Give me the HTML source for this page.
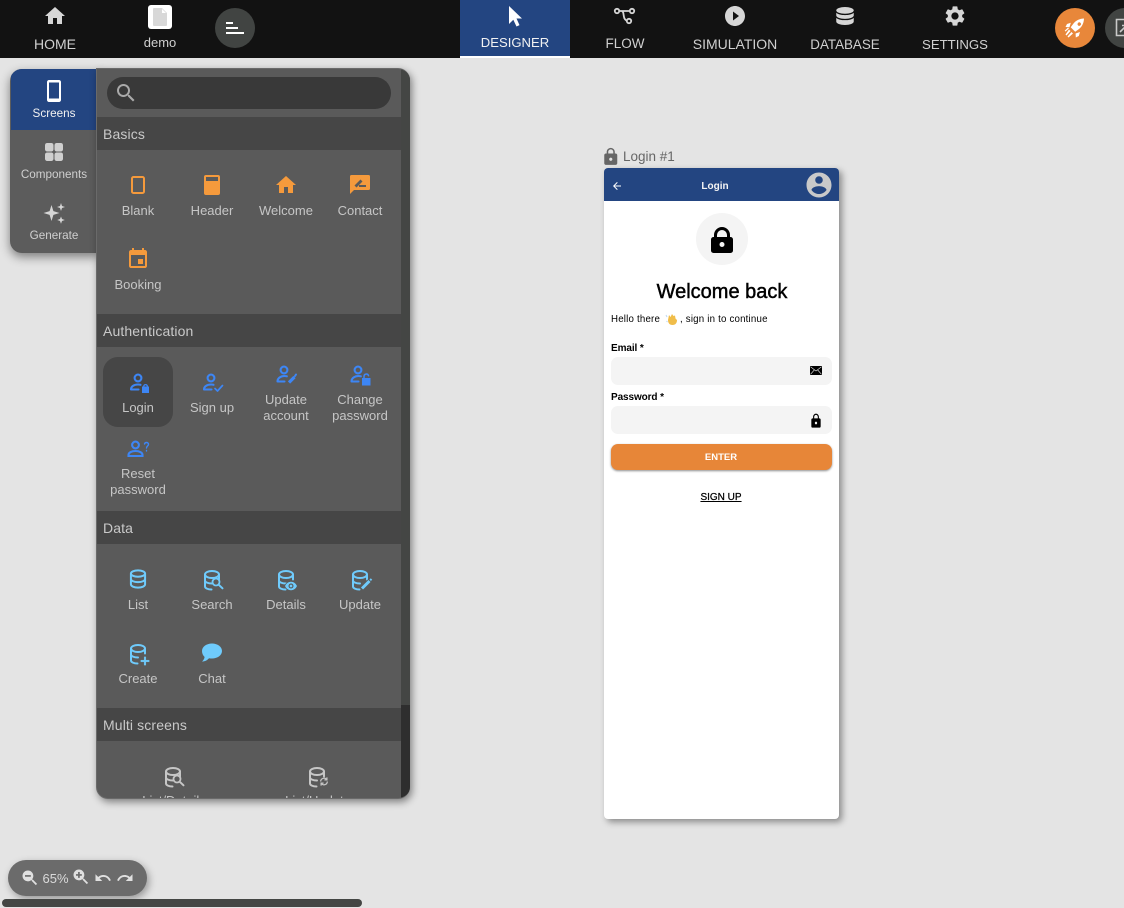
<!DOCTYPE html>
<html><head><meta charset="utf-8"><title>Designer</title>
<style>
html,body{margin:0;padding:0;width:1124px;height:908px;overflow:hidden;background:#e4e4e4;font-family:"Liberation Sans",sans-serif}
*{box-sizing:border-box}
.a{position:absolute}
.t{position:absolute;text-align:center;white-space:nowrap;transform:translateX(-50%);line-height:16px}
svg{position:absolute;display:block}
#top{left:0;top:0;width:1124px;height:58px;background:#121212;overflow:hidden}
.nav{font-size:14px;color:#d0d0d0}
.lab{font-size:13px;color:#c6c6c6;line-height:16px;margin-top:1px}
.sec{position:absolute;left:1px;width:304px;height:33px;background:#464646;color:#c9c9c9;font-size:14px;line-height:35px;padding-left:6px;letter-spacing:.12px}
.ltab{font-size:11.7px;color:#cfcfcf;margin-top:1px}
.r{font-family:"Liberation Sans",sans-serif;color:#000}
</style></head>
<body>
<svg width="0" height="0" style="position:absolute"><defs>
<symbol id="db" viewBox="0 0 24 24"><ellipse cx="9" cy="5.500" rx="7" ry="3.500" fill="none" stroke="currentColor" stroke-width="2"/><path d="M2 5.500v12c0 1.700 2.800 3 6.500 3M16 5.500v5M2 11.500c0 1.700 3 3 7 3" fill="none" stroke="currentColor" stroke-width="2" stroke-linecap="round"/></symbol>
</defs></svg>

<div id="top" class="a">
  <svg style="left:43px;top:4px" width="24" height="24" viewBox="0 0 24 24" fill="#d6d6d6"><path d="M10 20v-6h4v6h5v-8h3L12 3 2 12h3v8z"/></svg>
  <div class="t nav" style="left:55px;top:36px">HOME</div>
  <div class="a" style="left:148px;top:5px;width:24px;height:24px;background:#fff;border-radius:3px"></div>
  <svg style="left:152px;top:8px" width="16" height="18" viewBox="0 0 16 18"><path d="M2 0h8l5 5v12a1 1 0 0 1-1 1H2a1 1 0 0 1-1-1V1a1 1 0 0 1 1-1z" fill="#d8d8d8"/><path d="M10 1v4h4z" fill="#fff"/></svg>
  <div class="t" style="left:160px;top:35px;font-size:13px;color:#d0d0d0">demo</div>
  <div class="a" style="left:215px;top:8px;width:40px;height:40px;border-radius:50%;background:#414442"></div>
  <div class="a" style="left:226px;top:22px;width:7px;height:2px;background:#fff"></div>
  <div class="a" style="left:226px;top:27px;width:12px;height:2px;background:#fff"></div>
  <div class="a" style="left:226px;top:32px;width:18px;height:2px;background:#fff"></div>

  <div class="a" style="left:460px;top:0;width:110px;height:58px;background:#234581;border-bottom:2px solid #fff"></div>
  <svg style="left:505px;top:4px" width="22" height="24" viewBox="0 0 22 24"><path d="M4 2v18l4.300-4.200 3.200 6.700 3-1.400-3-6.600H17z" fill="#fff"/></svg>
  <div class="t nav" style="left:515px;top:35px;color:#f2f2f2;font-size:13.100px">DESIGNER</div>

  <svg style="left:613px;top:4px" width="24" height="24" viewBox="0 0 24 24" fill="none" stroke="#d6d6d6" stroke-width="1.800"><circle cx="4" cy="7" r="2.200"/><circle cx="19" cy="7" r="2.200"/><circle cx="16" cy="17" r="2.200"/><path d="M6.300 7H16.700M8.500 7c1 0 1.500.6 1.800 2l.6 3.500c.3 2 1.300 3.500 2.900 4.300"/></svg>
  <div class="t nav" style="left:625px;top:36px;font-size:13.500px">FLOW</div>

  <svg style="left:723px;top:4px" width="24" height="24" viewBox="0 0 24 24"><path d="M12 2C6.480 2 2 6.480 2 12s4.480 10 10 10 10-4.480 10-10S17.520 2 12 2zm-2 14.500v-9l6 4.500-6 4.500z" fill="#d6d6d6"/></svg>
  <div class="t nav" style="left:735px;top:36px">SIMULATION</div>

  <svg style="left:833px;top:4px" width="24" height="24" viewBox="0 0 24 24" fill="#d6d6d6"><g transform="translate(12 12) scale(1.25 1.02) translate(-12 -11.500)"><ellipse cx="12" cy="6" rx="7" ry="3.300"/><path d="M5 8.300v2.700c0 1.800 3.100 3.300 7 3.300s7-1.500 7-3.300V8.300c-1.200 1.500-3.900 2.300-7 2.300s-5.800-.8-7-2.300zM5 13.300V17c0 1.800 3.100 3.300 7 3.300s7-1.500 7-3.300v-3.700c-1.200 1.500-3.900 2.300-7 2.300s-5.800-.8-7-2.300z"/></g></svg>
  <div class="t nav" style="left:845px;top:37px;font-size:13.400px">DATABASE</div>

  <svg style="left:943px;top:4px" width="24" height="24" viewBox="0 0 24 24"><path d="M19.140 12.940c.04-.3.06-.61.06-.94 0-.32-.02-.64-.07-.94l2.030-1.580c.18-.14.23-.41.12-.61l-1.920-3.320c-.12-.22-.37-.29-.59-.22l-2.390.96c-.5-.38-1.030-.7-1.620-.94l-.36-2.540c-.04-.24-.24-.41-.48-.41h-3.840c-.24 0-.43.17-.47.41l-.36 2.540c-.59.24-1.130.57-1.620.94l-2.390-.96c-.22-.08-.47 0-.59.22L2.740 8.870c-.12.21-.08.47.12.61l2.030 1.580c-.05.3-.09.63-.09.94s.02.64.07.94l-2.030 1.580c-.18.14-.23.41-.12.61l1.920 3.320c.12.22.37.29.59.22l2.390-.96c.5.38 1.030.7 1.620.94l.36 2.540c.05.24.24.41.48.41h3.840c.24 0 .44-.17.47-.41l.36-2.540c.59-.24 1.130-.56 1.620-.94l2.390.96c.22.08.47 0 .59-.22l1.920-3.320c.12-.22.07-.47-.12-.61l-2.010-1.580zM12 15.600c-1.980 0-3.600-1.620-3.600-3.600s1.620-3.600 3.600-3.600 3.600 1.620 3.600 3.600-1.620 3.600-3.600 3.600z" fill="#d6d6d6"/></svg>
  <div class="t nav" style="left:955px;top:37px;font-size:13.200px">SETTINGS</div>

  <div class="a" style="left:1055px;top:8px;width:40px;height:40px;border-radius:50%;background:#e8873a"></div>
  <svg style="left:1063px;top:16px" width="24" height="24" viewBox="0 0 24 24" fill="#fff"><path d="M21 2.500c-4.500.2-8 1.800-10.500 5l-2.800 3.800 4.500 4.500 3.800-2.800c3.200-2.500 4.800-6 5-10.500zM15 7a1.700 1.700 0 1 1 2.400 2.400A1.700 1.700 0 0 1 15 7z" fill-rule="evenodd"/><path d="M7.800 6.800 4 8l-1.500 3 4 .2zM17 16l-1.200 4-3 1.500-.2-4zM6 13.500l1.500 1.500-4 4.500-1-1zM8.500 16l1.500 1.500-4.500 4-1-1zM5 11.500l1 1-3.500 3-.8-.8z"/></svg>
  <div class="a" style="left:1105px;top:8px;width:40px;height:40px;border-radius:50%;background:#414442"></div>
  <svg style="left:1114px;top:18px" width="20" height="20" viewBox="0 0 20 20" fill="none" stroke="#c9c9c9" stroke-width="1.600"><path d="M2.500 1.500h15v16h-15z"/><path d="M6 14l6-6M8 7.500h4.500V12"/></svg>
</div>

<!-- left tabs -->
<div class="a" style="left:10px;top:69px;width:90px;height:184px;background:#5c5c5c;border-radius:12px 0 0 12px;box-shadow:0 4px 10px rgba(0,0,0,.45);overflow:hidden">
  <div class="a" style="left:1px;top:0;width:86px;height:61px;background:#234581"></div>
</div>
<svg style="left:44px;top:79px" width="20" height="24" viewBox="0 0 20 24"><path d="M5 1h10c1.100 0 2 .9 2 2v18c0 1.100-.9 2-2 2H5c-1.100 0-2-.9-2-2V3c0-1.100.9-2 2-2zm0 3v15.500h10V3.500H5z" fill="#fff" fill-rule="evenodd"/></svg>
<div class="t ltab" style="left:54px;top:105px;color:#f2f2f2">Screens</div>
<svg style="left:44px;top:142px" width="20" height="20" viewBox="0 0 20 20" fill="#cfcfcf"><rect x="1" y="1" width="8.500" height="8.500" rx="2.200"/><rect x="10.500" y="1" width="8.500" height="8.500" rx="2.200"/><rect x="1" y="10.500" width="8.500" height="8.500" rx="2.200"/><rect x="10.500" y="10.500" width="8.500" height="8.500" rx="2.200"/></svg>
<div class="t ltab" style="left:54px;top:166px">Components</div>
<svg style="left:42px;top:201px" width="24" height="24" viewBox="0 0 24 24" fill="#d6d6d6"><path d="M9.500 4l1.900 6.100 6.100 1.900-6.100 1.900-1.900 6.100-1.900-6.100L1.500 12l6.100-1.900zM19 2l1 3 3 1-3 1-1 3-1-3-3-1 3-1zM19 15.500l1 2.500 2.800 1-2.800 1-1 2.800-1-2.800-2.800-1 2.800-1z"/></svg>
<div class="t ltab" style="left:54px;top:227px">Generate</div>

<!-- main panel -->
<div class="a" style="left:96px;top:68px;width:314px;height:731px;background:#5a5a5a;border-radius:0 12px 12px 12px;box-shadow:2px 3px 8px rgba(0,0,0,.45);overflow:hidden;border:1px solid #6a6a6a;border-width:1px 0 1px 1px">
  <div class="a" style="left:304px;top:0;width:10px;height:636px;background:#444644"></div>
  <div class="a" style="left:304px;top:636px;width:10px;height:100px;background:#2e2e2e"></div>
  <div class="a" style="left:10px;top:8px;width:284px;height:32px;border-radius:16px;background:#393939"></div>
  <div class="sec" style="left:0;top:48px">Basics</div>
  <div class="sec" style="left:0;top:245px">Authentication</div>
  <div class="sec" style="left:0;top:442px">Data</div>
  <div class="sec" style="left:0;top:639px">Multi screens</div>
  <div class="a" style="left:6px;top:288px;width:70px;height:70px;border-radius:15px;background:#464646"></div>
  <div class="t lab" style="left:77px;top:723px">List/Details</div>
  <div class="t lab" style="left:221px;top:723px">List/Update</div>
</div>
<svg style="left:114px;top:81px" width="24" height="24" viewBox="0 0 24 24"><path d="M15.500 14h-.79l-.28-.27C15.410 12.590 16 11.110 16 9.500 16 5.910 13.090 3 9.500 3S3 5.910 3 9.500 5.910 16 9.500 16c1.610 0 3.090-.59 4.230-1.570l.27.280v.79l5 4.990L20.490 19l-4.990-5zm-6 0C7.010 14 5 11.990 5 9.500S7.010 5 9.500 5 14 7.010 14 9.500 11.990 14 9.500 14z" fill="#aaa"/></svg>

<!-- Basics -->
<svg style="left:126px;top:172px" width="24" height="24" viewBox="0 0 24 24"><rect x="6" y="5" width="12" height="16" rx="1.500" fill="none" stroke="#f59a3c" stroke-width="2"/></svg>
<div class="t lab" style="left:138px;top:202px">Blank</div>
<svg style="left:200px;top:172px" width="24" height="24" viewBox="0 0 24 24"><path d="M6 3h12a2 2 0 0 1 2 2v16a2 2 0 0 1-2 2H6a2 2 0 0 1-2-2V5a2 2 0 0 1 2-2zM6 5v4h12V5z" fill="#f59a3c" fill-rule="evenodd"/></svg>
<div class="t lab" style="left:212px;top:202px">Header</div>
<svg style="left:274px;top:173px" width="24" height="24" viewBox="0 0 24 24"><path d="M10 20v-6h4v6h5v-8h3L12 3 2 12h3v8z" fill="#f59a3c"/></svg>
<div class="t lab" style="left:286px;top:202px">Welcome</div>
<svg style="left:348px;top:172px" width="24" height="24" viewBox="0 0 24 24"><path d="M3.500 3h17A1.500 1.500 0 0 1 22 4.500v12a1.500 1.500 0 0 1-1.500 1.500H6l-4 4V4.500A1.500 1.500 0 0 1 3.500 3z" fill="#f59a3c"/><path d="M7.500 14.500l6-6" stroke="#5a5a5a" stroke-width="2.800" fill="none"/><path d="M11 14h7" stroke="#5a5a5a" stroke-width="2" fill="none"/></svg>
<div class="t lab" style="left:360px;top:202px">Contact</div>
<svg style="left:126px;top:247px" width="24" height="24" viewBox="0 0 24 24"><path d="M17 12h-5v5h5v-5zM16 1v2H8V1H6v2H5c-1.110 0-1.990.9-1.990 2L3 19c0 1.100.89 2 2 2h14c1.100 0 2-.9 2-2V5c0-1.100-.9-2-2-2h-1V1h-2zm3 18H5V8h14v11z" fill="#f59a3c"/></svg>
<div class="t lab" style="left:138px;top:276px">Booking</div>

<!-- Auth -->
<svg style="left:126px;top:372px" width="26" height="24" viewBox="0 0 26 24" fill="none" stroke="#3d86f5" stroke-width="2.100" stroke-linecap="round"><circle cx="12" cy="6" r="3.400"/><path d="M5 17.500c0-3.400 3.500-5 7-5 1 0 1.800.1 2.500.3M5 17.500h7.500"/><path d="M16.500 15h6v5.500h-6z" fill="#3d86f5" stroke-width="1"/><path d="M17.800 15v-1a1.800 1.800 0 0 1 3.500 0V15" stroke-width="1.300"/></svg>
<div class="t lab" style="left:138px;top:399px">Login</div>
<svg style="left:200px;top:372px" width="26" height="24" viewBox="0 0 26 24" fill="none" stroke="#3d86f5" stroke-width="2.100" stroke-linecap="round" stroke-linejoin="round"><circle cx="11" cy="6" r="3.400"/><path d="M4 17.500c0-3.400 3.500-5 7-5 1 0 1.800.1 2.500.3M4 17.500h7.500"/><path d="M15 16.500l2.500 2.500 5-5.500" stroke-width="1.700"/></svg>
<div class="t lab" style="left:212px;top:399px">Sign up</div>
<svg style="left:274px;top:362px" width="26" height="24" viewBox="0 0 26 24" fill="none" stroke="#3d86f5" stroke-width="2.100" stroke-linecap="round" stroke-linejoin="round"><circle cx="10" cy="8" r="3.400"/><path d="M3.500 19.500c0-3.400 3.300-5.500 6.800-5.500 1 0 1.800.1 2.500.3M3.500 19.500h7"/><path d="M15 20.500l5.500-5.500" stroke-width="3.200" stroke-linecap="butt"/><path d="M21 14l1-1.500" stroke-width="2"/></svg>
<div class="t lab" style="left:286px;top:391px">Update</div>
<div class="t lab" style="left:286px;top:407px">account</div>
<svg style="left:348px;top:362px" width="26" height="24" viewBox="0 0 26 24" fill="none" stroke="#3d86f5" stroke-width="2.100" stroke-linecap="round"><circle cx="10" cy="8" r="3.400"/><path d="M3.500 19.500c0-3.400 3.300-5.500 6.800-5.500 1 0 1.800.1 2.500.3M3.500 19.500h7"/><path d="M14.500 16.500h7.500v6.500h-7.500z" fill="#3d86f5" stroke-width="1"/><path d="M16 16v-1.700a2.300 2.300 0 0 1 4.500-.6" stroke-width="1.500"/></svg>
<div class="t lab" style="left:360px;top:391px">Change</div>
<div class="t lab" style="left:360px;top:407px">password</div>
<svg style="left:126px;top:437px" width="26" height="24" viewBox="0 0 26 24" fill="none" stroke="#3d86f5" stroke-width="2.100" stroke-linecap="round"><circle cx="9.500" cy="8" r="3.400"/><path d="M2.500 19v-1c0-2.500 3.200-4 7-4s7 1.500 7 4v1z"/><path d="M18.500 7c.3-1 1.100-1.500 2-1.500 1.200 0 2 .8 2 1.800 0 1.800-2 1.700-2 3.700M20.500 13.500v.5" stroke-width="1.400"/></svg>
<div class="t lab" style="left:138px;top:465px">Reset</div>
<div class="t lab" style="left:138px;top:481px">password</div>

<!-- Data -->
<svg style="left:128px;top:569px" width="20" height="20" viewBox="0 0 24 24" fill="none" stroke="#6fcbfc" stroke-width="2.400" stroke-linecap="round"><ellipse cx="12" cy="5.500" rx="8.500" ry="3.800"/><path d="M3.500 5.500v13c0 2.100 3.800 3.800 8.500 3.800s8.500-1.700 8.500-3.800v-13M3.500 12c0 2.100 3.800 3.800 8.500 3.800s8.500-1.700 8.500-3.800"/></svg>
<div class="t lab" style="left:138px;top:596px">List</div>
<svg style="left:203px;top:569px;color:#6fcbfc" width="24" height="24"><use href="#db"/></svg>
<svg style="left:203px;top:569px" width="24" height="24" viewBox="0 0 24 24" fill="none" stroke="#6fcbfc" stroke-width="1.800" stroke-linecap="round"><circle cx="13" cy="13" r="3.500" fill="#5a5a5a"/><path d="M15.800 15.800l3.700 3.500" stroke-width="2"/></svg>
<div class="t lab" style="left:212px;top:596px">Search</div>
<svg style="left:277px;top:569px;color:#6fcbfc" width="24" height="24"><use href="#db"/></svg>
<svg style="left:284px;top:581px" width="14" height="10" viewBox="0 0 16 12"><path d="M8 .5C4.500.5 1.700 3 .3 6c1.400 3 4.200 5.500 7.700 5.500S14.300 9 15.700 6C14.300 3 11.500.5 8 .5z" fill="#6fcbfc" stroke="#5a5a5a" stroke-width=".8"/><circle cx="8" cy="6" r="3" fill="#5a5a5a"/><circle cx="8" cy="6" r="1.600" fill="#6fcbfc"/></svg>
<div class="t lab" style="left:286px;top:596px">Details</div>
<svg style="left:351px;top:569px;color:#6fcbfc" width="24" height="24"><use href="#db"/></svg>
<svg style="left:360px;top:577px" width="14" height="14" viewBox="0 0 14 14" fill="none"><path d="M2 11.500l7.500-7.500" stroke="#5a5a5a" stroke-width="4.500"/><path d="M2 11.500l7.500-7.500" stroke="#6fcbfc" stroke-width="3"/><path d="M10.200 3.300l1.300-1.300" stroke="#6fcbfc" stroke-width="2"/></svg>
<div class="t lab" style="left:360px;top:596px">Update</div>
<svg style="left:129px;top:643px;color:#6fcbfc" width="24" height="24"><use href="#db"/></svg>
<svg style="left:140px;top:655.500px" width="10" height="10" viewBox="0 0 12 12"><path d="M5 1h2v4h4v2H7v4H5V7H1V5h4z" fill="#6fcbfc" stroke="#6fcbfc" stroke-width=".4"/></svg>
<div class="t lab" style="left:138px;top:670px">Create</div>
<svg style="left:200px;top:642px" width="24" height="22" viewBox="0 0 24 22"><path d="M12 1.500c5.500 0 10 3.200 10 7.500s-4.500 7.500-10 7.500c-1 0-2-.1-3-.3C7.500 18 5 19.500 2 19.500c1.400-1 2.300-2.700 2.600-4.500C3 13.500 2 11.400 2 9c0-4.300 4.500-7.500 10-7.500z" fill="#6fcbfc"/></svg>
<div class="t lab" style="left:212px;top:670px">Chat</div>

<!-- Multi -->
<svg style="left:164px;top:766px;color:#c6c6c6" width="24" height="24"><use href="#db"/></svg>
<svg style="left:164px;top:766px" width="24" height="24" viewBox="0 0 24 24" fill="none" stroke="#c6c6c6" stroke-width="1.800" stroke-linecap="round"><circle cx="13" cy="13" r="3.500" fill="#5a5a5a"/><path d="M15.800 15.800l3.700 3.500" stroke-width="2"/></svg>
<svg style="left:308px;top:766px;color:#c6c6c6" width="24" height="24"><use href="#db"/></svg>
<svg style="left:319px;top:776px" width="10" height="11" viewBox="0 0 12 12" fill="none" stroke="#c6c6c6" stroke-width="1.500"><path d="M2 6a4 4 0 0 1 7-2.600M10 6a4 4 0 0 1-7 2.600M9.500 1v3h-3M2.500 11V8h3"/></svg>

<!-- Phone -->
<svg style="left:601px;top:147px" width="19.500" height="19.500" viewBox="0 0 24 24"><path d="M18 8h-1V6c0-2.760-2.240-5-5-5S7 3.240 7 6v2H6c-1.100 0-2 .9-2 2v10c0 1.100.9 2 2 2h12c1.100 0 2-.9 2-2V10c0-1.100-.9-2-2-2zm-6 9c-1.100 0-2-.9-2-2s.9-2 2-2 2 .9 2 2-.9 2-2 2zm3.100-9H8.900V6c0-1.710 1.390-3.100 3.100-3.100 1.710 0 3.100 1.390 3.100 3.100v2z" fill="#666"/></svg>
<div class="a" style="left:623px;top:149px;font-size:13.500px;line-height:16px;color:#666">Login #1</div>
<div class="a" style="left:604px;top:168px;width:235px;height:651px;background:#fff;border-radius:4px;box-shadow:3px 3px 7px rgba(0,0,0,.4);overflow:hidden">
  <div class="a" style="left:0;top:0;width:235px;height:33px;background:#234581"></div>
</div>
<svg style="left:611px;top:180px" width="12" height="12" viewBox="0 0 24 24"><path d="M20 11H7.830l5.590-5.590L12 4l-8 8 8 8 1.410-1.410L7.830 13H20v-2z" fill="#fff"/></svg>
<div class="t" style="left:715px;top:179px;font-size:10px;font-weight:bold;color:#f4f4f4">Login</div>
<svg style="left:804px;top:170px" width="30" height="30" viewBox="0 0 24 24"><path d="M12 2C6.480 2 2 6.480 2 12s4.480 10 10 10 10-4.480 10-10S17.520 2 12 2zm0 3c1.660 0 3 1.340 3 3s-1.340 3-3 3-3-1.340-3-3 1.340-3 3-3zm0 14.200c-2.500 0-4.710-1.280-6-3.220.03-1.990 4-3.080 6-3.080 1.990 0 5.970 1.090 6 3.080-1.290 1.940-3.500 3.220-6 3.220z" fill="#c9c9c9"/></svg>
<div class="a" style="left:696px;top:213px;width:52px;height:52px;border-radius:50%;background:#f4f4f4"></div>
<svg style="left:706px;top:223px" width="32" height="32" viewBox="0 0 32 32"><path d="M9.500 16v-4a6.500 6.500 0 0 1 13 0v4" fill="none" stroke="#000" stroke-width="3"/><rect x="5" y="14" width="22" height="16" rx="2.500" fill="#000"/><circle cx="16" cy="21.500" r="2.500" fill="#f4f4f4"/></svg>
<div class="t r" style="left:722px;top:284px;font-size:20px;line-height:16px;-webkit-text-stroke:.45px #000">Welcome back</div>
<div class="a r" style="left:611px;top:312px;font-size:9.700px;line-height:15px;letter-spacing:.2px">Hello there</div>
<svg style="left:665px;top:312px" width="14" height="14" viewBox="0 0 14 14"><path d="M3 8l1-5 1.500 2L7 2l1.500 2 1.500-.5.500 3L12 8c0 3-1.500 5-4.500 5S3 11 3 8z" fill="#f0bd4a"/><path d="M1 3l1 2M1.500 9l1 1" stroke="#bcd8f5" stroke-width="1"/></svg>
<div class="a r" style="left:680px;top:312px;font-size:9.700px;line-height:15px;letter-spacing:.2px">, sign in to continue</div>
<div class="a r" style="left:611px;top:342px;font-size:10px;line-height:14px;font-weight:bold;letter-spacing:-.1px">Email *</div>
<div class="a" style="left:611px;top:357px;width:221px;height:28px;background:#f4f4f4;border-radius:7px"></div>
<svg style="left:810px;top:366px" width="12" height="9" viewBox="0 0 12 9"><rect width="12" height="9" fill="#000"/><path d="M.5.8 6 5l5.500-4.200M.5 8.300 4.300 4M11.500 8.300 7.700 4" stroke="#e8e8e8" stroke-width=".6" fill="none"/></svg>
<div class="a r" style="left:611px;top:391px;font-size:10px;line-height:14px;font-weight:bold;letter-spacing:-.1px">Password *</div>
<div class="a" style="left:611px;top:406px;width:221px;height:28px;background:#f4f4f4;border-radius:7px"></div>
<svg style="left:809px;top:413px" width="14" height="16" viewBox="0 0 24 24" preserveAspectRatio="none"><path d="M18 8h-1V6c0-2.760-2.240-5-5-5S7 3.240 7 6v2H6c-1.100 0-2 .9-2 2v10c0 1.100.9 2 2 2h12c1.100 0 2-.9 2-2V10c0-1.100-.9-2-2-2zm-6 9c-1.100 0-2-.9-2-2s.9-2 2-2 2 .9 2 2-.9 2-2 2zm3.100-9H8.900V6c0-1.710 1.390-3.100 3.100-3.100 1.710 0 3.100 1.390 3.100 3.100v2z" fill="#000"/></svg>
<div class="a" style="left:611px;top:444px;width:221px;height:26px;background:#e78638;border-radius:7px;box-shadow:0 1px 2px rgba(0,0,0,.45)"></div>
<div class="t" style="left:721px;top:450px;font-size:9.500px;font-weight:bold;color:#fff">ENTER</div>
<div class="t r" style="left:721px;top:489px;font-size:10px;text-decoration:underline;-webkit-text-stroke:.25px #000;margin-top:.5px">SIGN UP</div>

<!-- Zoom pill -->
<div class="a" style="left:8px;top:860px;width:139px;height:36px;border-radius:18px;background:#6b6b6b;box-shadow:2px 3px 8px rgba(0,0,0,.35)"></div>
<svg style="left:20px;top:868px" width="20" height="20" viewBox="0 0 24 24"><path d="M15.500 14h-.79l-.28-.27C15.410 12.590 16 11.110 16 9.500 16 5.910 13.090 3 9.500 3S3 5.910 3 9.500 5.910 16 9.500 16c1.610 0 3.090-.59 4.230-1.570l.27.280v.79l5 4.990L20.490 19l-4.990-5z" fill="#e0e0e0"/><path d="M6 8.500h7v2H6z" fill="#6b6b6b"/></svg>
<div class="t" style="left:55.500px;top:871px;font-size:13px;color:#dadada">65%</div>
<svg style="left:71px;top:867px" width="20" height="20" viewBox="0 0 24 24"><path d="M15.500 14h-.79l-.28-.27C15.410 12.590 16 11.110 16 9.500 16 5.910 13.090 3 9.500 3S3 5.910 3 9.500 5.910 16 9.500 16c1.610 0 3.090-.59 4.230-1.570l.27.280v.79l5 4.990L20.490 19l-4.990-5z" fill="#e0e0e0"/><path d="M8.500 6h2v2.500H13v2h-2.500V13h-2v-2.500H6v-2h2.500z" fill="#6b6b6b"/></svg>
<svg style="left:94px;top:869px" width="18" height="18" viewBox="0 0 24 24"><path d="M12.500 8c-2.650 0-5.050.99-6.900 2.600L2 7v9h9l-3.620-3.620c1.390-1.160 3.160-1.880 5.120-1.880 3.540 0 6.550 2.310 7.600 5.500l2.370-.78C21.080 11.030 17.150 8 12.500 8z" fill="#e0e0e0"/></svg>
<svg style="left:116px;top:869px" width="18" height="18" viewBox="0 0 24 24"><path d="M18.400 10.600C16.550 8.990 14.150 8 11.500 8c-4.650 0-8.580 3.030-9.960 7.220L3.900 16c1.050-3.190 4.050-5.500 7.600-5.500 1.950 0 3.730.72 5.120 1.880L13 16h9V7l-3.600 3.600z" fill="#e0e0e0"/></svg>

<div class="a" style="left:2px;top:899px;width:360px;height:8px;border-radius:4px;background:#444644"></div>
</body></html>
